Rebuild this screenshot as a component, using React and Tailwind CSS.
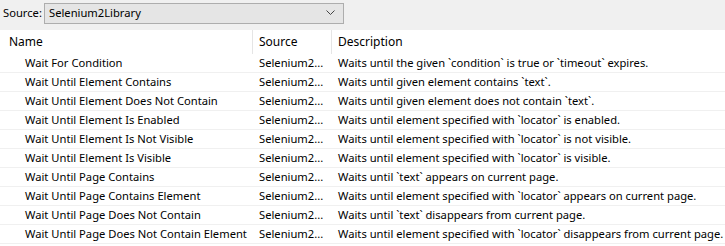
import React from "react";

const rows = [
  ["Wait For Condition", "Waits until the given `condition` is true or `timeout` expires."],
  ["Wait Until Element Contains", "Waits until given element contains `text`."],
  ["Wait Until Element Does Not Contain", "Waits until given element does not contain `text`."],
  ["Wait Until Element Is Enabled", "Waits until element specified with `locator` is enabled."],
  ["Wait Until Element Is Not Visible", "Waits until element specified with `locator` is not visible."],
  ["Wait Until Element Is Visible", "Waits until element specified with `locator` is visible."],
  ["Wait Until Page Contains", "Waits until `text` appears on current page."],
  ["Wait Until Page Contains Element", "Waits until element specified with `locator` appears on current page."],
  ["Wait Until Page Does Not Contain", "Waits until `text` disappears from current page."],
  ["Wait Until Page Does Not Contain Element", "Waits until element specified with `locator` disappears from current page."],
];

const App = () => {
  return (
    <div className="w-[725px] h-[246px] overflow-hidden bg-white text-black text-[11.2px] font-['Noto_Sans',sans-serif]">
      {/* barra de fuente */}
      <div className="h-[30px] bg-[#f0f0f0] flex items-center pl-[3px] pb-[4px]">
        <span className="w-[41px]">Source:</span>
        <div className="w-[300px] h-[21px] border border-[#adadad] bg-[#e5e5e5] flex items-center justify-between pl-[4px] pr-[8px]">
          <span>Selenium2Library</span>
          <svg width="9" height="6" viewBox="0 0 9 6">
            <path d="M0.5 0.5 L4.5 4.5 L8.5 0.5" fill="none" stroke="#444" strokeWidth="1" />
          </svg>
        </div>
      </div>

      {/* cabecera */}
      <div className="grid grid-cols-[253px_79px_1fr] h-[24px] items-center text-[12px]">
        <div className="pl-[9px] h-full flex items-center border-r border-[#e5e5e5]">Name</div>
        <div className="pl-[6px] h-full flex items-center border-r border-[#e5e5e5]">Source</div>
        <div className="pl-[6px]">Description</div>
      </div>

      {/* filas */}
      {rows.map((r, i) => (
        <div key={i} className="grid grid-cols-[253px_79px_1fr] h-[19px] items-center border-b border-[#f0f0f0] whitespace-nowrap">
          <div className="pl-[25px]">{r[0]}</div>
          <div className="pl-[6px]">Selenium2...</div>
          <div className="pl-[6px] overflow-hidden">{r[1]}</div>
        </div>
      ))}
    </div>
  );
};

export default App;
